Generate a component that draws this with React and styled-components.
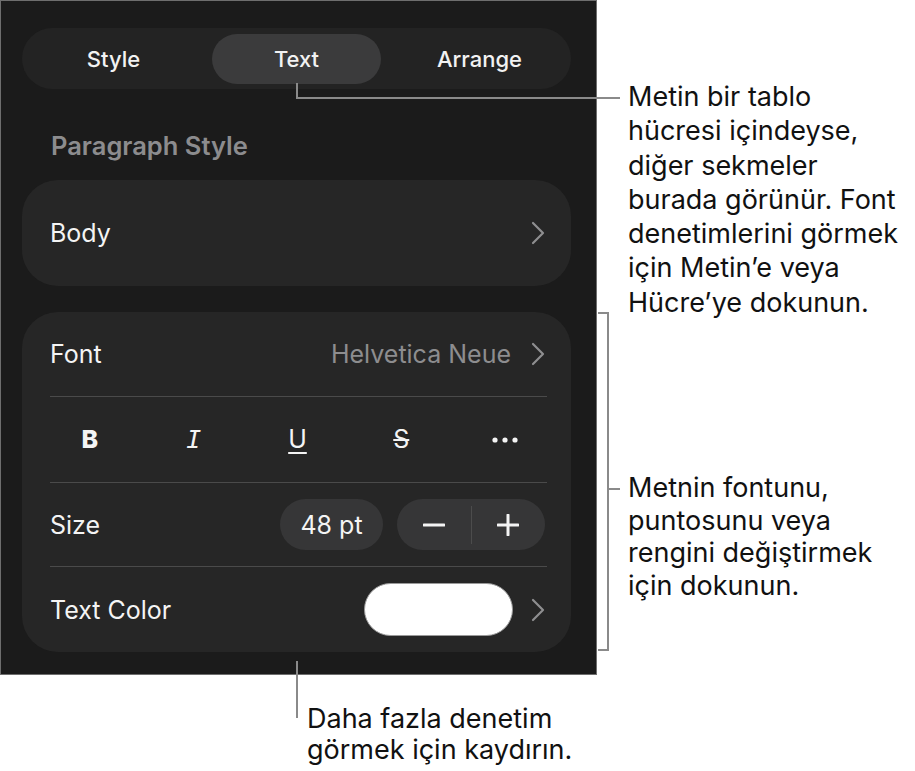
import styled, { createGlobalStyle } from 'styled-components';

const GlobalStyle = createGlobalStyle`
  html, body {
    margin: 0;
    padding: 0;
    background: #ffffff;
  }
  * {
    box-sizing: border-box;
  }
`;

const Figure = styled.div`
  position: relative;
  width: 915px;
  height: 771px;
  font-family: Inter, 'Noto Sans', sans-serif;
`;

const Panel = styled.div`
  width: 597px;
  height: 675px;
  background: #1b1b1b;
  border: 1px solid #6e6e6e;
  padding: 27px 25px 0 21px;
  display: flex;
  flex-direction: column;
`;

const Segmented = styled.div`
  height: 61px;
  border-radius: 31px;
  background: #232323;
  display: grid;
  grid-template-columns: repeat(3, 1fr);
  align-items: center;
`;

const Segment = styled.div`
  height: 50px;
  margin: 0 7px;
  border-radius: 25px;
  background: ${(p) => (p.$active ? '#3b3b3c' : 'transparent')};
  color: #f2f2f2;
  font-size: 22px;
  font-weight: 500;
  display: flex;
  align-items: center;
  justify-content: center;
`;

const SectionLabel = styled.div`
  margin: 43px 0 0 29px;
  height: 28px;
  line-height: 28px;
  color: #8c8c8e;
  font-size: 25.5px;
  font-weight: 600;
`;

const Card = styled.div`
  margin-top: ${(p) => p.$gap}px;
  background: #262626;
  border-radius: 36px;
  display: flex;
  flex-direction: column;
`;

const Row = styled.div`
  height: ${(p) => p.$h || 85}px;
  padding: 0 26px 0 28px;
  display: flex;
  align-items: center;
  gap: 14px;
  color: #f4f4f4;
  font-size: 25px;
`;

const RowLabel = styled.span`
  flex: 1;
`;

const Value = styled.span`
  color: #8d8d8f;
  margin-right: 6px;
`;

const Divider = styled.div`
  height: 1px;
  margin: 0 24px 0 28px;
  background: #4a4a4a;
`;

const StyleRow = styled.div`
  height: 85px;
  padding: 0 14px 0 16px;
  display: grid;
  grid-template-columns: repeat(5, 1fr);
  align-items: center;
  justify-items: center;
  color: #f4f4f4;
`;

const Glyph = styled.span`
  font-size: 25px;
  line-height: 1;
  font-family: ${(p) => (p.$mono ? "'DejaVu Sans Mono', monospace" : 'Inter, sans-serif')};
  font-weight: ${(p) => (p.$bold ? 800 : 400)};
  font-style: ${(p) => (p.$italic ? 'italic' : 'normal')};
  text-decoration: ${(p) => p.$deco || 'none'};
  text-decoration-thickness: 2px;
  text-underline-offset: 4px;
`;

const SizePill = styled.div`
  width: 103px;
  height: 51px;
  border-radius: 26px;
  background: #363637;
  display: flex;
  align-items: center;
  justify-content: center;
  font-size: 25px;
`;

const Stepper = styled.div`
  width: 148px;
  height: 51px;
  border-radius: 26px;
  background: #363637;
  display: grid;
  grid-template-columns: 1fr 1px 1fr;
  align-items: center;
  justify-items: center;
`;

const StepDivider = styled.div`
  width: 1px;
  height: 38px;
  background: #4c4c4c;
`;

const Swatch = styled.div`
  width: 149px;
  height: 53px;
  border-radius: 27px;
  background: #ffffff;
  border: 1px solid #9a9a9a;
  margin-right: 4px;
`;

const Callout = styled.div`
  position: absolute;
  left: ${(p) => p.$x}px;
  top: ${(p) => p.$y}px;
  color: #111111;
  font-size: 27px;
  line-height: ${(p) => p.$lh || 33}px;
  white-space: pre-line;
`;

const Leader = styled.svg`
  position: absolute;
  left: 0;
  top: 0;
  pointer-events: none;
`;

const Chevron = () => (
  <svg width="14" height="24" viewBox="0 0 14 24">
    <path d="M2 2 L12 12 L2 22" fill="none" stroke="#8e8e90" strokeWidth="2.2" strokeLinecap="round" strokeLinejoin="round" />
  </svg>
);

const Dots = () => (
  <svg width="26" height="6" viewBox="0 0 26 6">
    <circle cx="3" cy="3" r="2.6" fill="#f4f4f4" />
    <circle cx="13" cy="3" r="2.6" fill="#f4f4f4" />
    <circle cx="23" cy="3" r="2.6" fill="#f4f4f4" />
  </svg>
);

const Minus = () => (
  <svg width="22" height="22" viewBox="0 0 22 22">
    <path d="M1 11 H21" stroke="#f4f4f4" strokeWidth="3" strokeLinecap="round" />
  </svg>
);

const Plus = () => (
  <svg width="22" height="22" viewBox="0 0 22 22">
    <path d="M1 11 H21 M11 1 V21" stroke="#f4f4f4" strokeWidth="3" strokeLinecap="round" />
  </svg>
);

export default function App() {
  return (
    <Figure>
      <GlobalStyle />
      <Panel>
        <Segmented>
          <Segment>Style</Segment>
          <Segment $active>Text</Segment>
          <Segment>Arrange</Segment>
        </Segmented>

        <SectionLabel>Paragraph Style</SectionLabel>

        <Card $gap={20}>
          <Row $h={106}>
            <RowLabel>Body</RowLabel>
            <Chevron />
          </Row>
        </Card>

        <Card $gap={26}>
          <Row $h={84}>
            <RowLabel>Font</RowLabel>
            <Value>Helvetica Neue</Value>
            <Chevron />
          </Row>
          <Divider />
          <StyleRow>
            <Glyph $bold>B</Glyph>
            <Glyph $mono $italic>I</Glyph>
            <Glyph $deco="underline">U</Glyph>
            <Glyph $deco="line-through">S</Glyph>
            <Dots />
          </StyleRow>
          <Divider />
          <Row $h={83}>
            <RowLabel>Size</RowLabel>
            <SizePill>48 pt</SizePill>
            <Stepper>
              <Minus />
              <StepDivider />
              <Plus />
            </Stepper>
          </Row>
          <Divider />
          <Row $h={85}>
            <RowLabel>Text Color</RowLabel>
            <Swatch />
            <Chevron />
          </Row>
        </Card>
      </Panel>

      <Leader width="915" height="771">
        <g fill="none" stroke="#8a8a8a" strokeWidth="2">
          <path d="M297 83 V98 H620" />
          <path d="M598 313 H608 V650 H598" />
          <path d="M608 489 H620" />
          <path d="M297 661 V718" />
        </g>
      </Leader>

      <Callout $x={628} $y={80} $lh={34.3}>
        {'Metin bir tablo\nhücresi içindeyse,\ndiğer sekmeler\nburada görünür. Font\ndenetimlerini görmek\niçin Metin’e veya\nHücre’ye dokunun.'}
      </Callout>
      <Callout $x={628} $y={472} $lh={32.5}>
        {'Metnin fontunu,\npuntosunu veya\nrengini değiştirmek\niçin dokunun.'}
      </Callout>
      <Callout $x={307} $y={703} $lh={31}>
        {'Daha fazla denetim\ngörmek için kaydırın.'}
      </Callout>
    </Figure>
  );
}
